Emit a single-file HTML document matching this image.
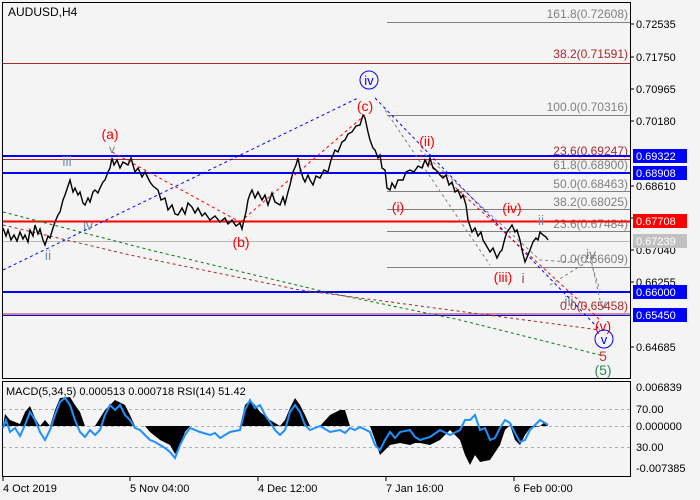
<!DOCTYPE html>
<html><head><style>
body{margin:0;background:#f4f4f4;}
svg{display:block;font-family:"Liberation Sans",sans-serif;}
</style></head><body>
<svg width="700" height="500" viewBox="0 0 700 500" xmlns="http://www.w3.org/2000/svg">
<rect width="700" height="500" fill="#f4f4f4"/>
<rect x="2.5" y="2.5" width="628" height="376" fill="none" stroke="#000"/>
<rect x="2.5" y="381.5" width="628" height="95" fill="none" stroke="#000"/>
<text x="8" y="16" font-size="12">AUDUSD,H4</text>

<g stroke="#808080" stroke-width="1">
<line x1="387" y1="22.5" x2="630" y2="22.5"/>
<line x1="387" y1="115.5" x2="630" y2="115.5"/>
<line x1="387" y1="191.5" x2="630" y2="191.5"/>
<line x1="387" y1="209.5" x2="630" y2="209.5"/>
<line x1="387" y1="231.5" x2="630" y2="231.5"/>
<line x1="387" y1="267.5" x2="630" y2="267.5"/>
</g>
<line x1="3" y1="241.5" x2="630" y2="241.5" stroke="#b8b8b8"/>
<g fill="#808080" font-size="12" text-anchor="end">
<text x="628" y="18">161.8(0.72608)</text>
<text x="628" y="111">100.0(0.70316)</text>
<text x="628" y="169">61.8(0.68900)</text>
<text x="628" y="188">50.0(0.68463)</text>
<text x="628" y="206">38.2(0.68025)</text>
<text x="628" y="228">23.6(0.67484)</text>
<text x="628" y="263">0.0(0.66609)</text>
</g>
<g fill="#a52a2a" font-size="12" text-anchor="end">
<text x="628" y="58">38.2(0.71591)</text>
<text x="628" y="155">23.6(0.69247)</text>
<text x="628" y="310">0.0(0.65458)</text>
</g>
<line x1="3" y1="63.5" x2="630" y2="63.5" stroke="#a52a2a"/>
<line x1="3" y1="159.5" x2="630" y2="159.5" stroke="#a52a2a"/>
<line x1="3" y1="156" x2="630" y2="156" stroke="#0000ff" stroke-width="2"/>
<line x1="3" y1="173" x2="630" y2="173" stroke="#0000ff" stroke-width="2"/>
<line x1="3" y1="221.5" x2="630" y2="221.5" stroke="#ff0000" stroke-width="2"/>
<line x1="3" y1="292" x2="630" y2="292" stroke="#0000ff" stroke-width="2"/>
<line x1="3" y1="314" x2="630" y2="314" stroke="#a52a2a" stroke-width="1"/>
<line x1="3" y1="315.5" x2="630" y2="315.5" stroke="#0000ff" stroke-width="1"/>

<g fill="none" stroke-width="1" stroke-dasharray="3,3">
<polyline points="3,270 358,98" stroke="#0000ff"/>
<polyline points="375,98 600,330" stroke="#0000ff"/>
<polyline points="240,222 365,115" stroke="#ff0000"/>
<polyline points="112,152 240,222" stroke="#ff0000"/>
<polyline points="420,155 600,320" stroke="#ff0000"/>
<polyline points="3,225 130,255 300,290 450,310 600,330" stroke="#a52a2a"/>
<polyline points="3,212 150,250 330,293 460,320 600,355" stroke="#008000"/>
<polyline points="385,110 490,265" stroke="#808080"/>
<polyline points="420,150 540,260 570,262 590,255 600,300" stroke="#808080"/>
<polyline points="550,285 590,260 600,290" stroke="#808080"/>
</g>

<g fill="none" stroke="#000" stroke-width="1.4">
<polyline points="3,228 6,236 8,230 11,240 14,235 17,241 20,232 23,239 25,235 28,242 30,230 33,236 35,225 38,234 40,229 43,240 45,245 48,236 50,238 53,228 55,222 58,215 60,212 63,200 65,195 68,186 70,180 73,192 75,188 78,195 80,192 83,203 85,205 88,198 90,202 93,192 95,190 98,193 100,188 103,182 105,180 108,172 110,168 112,158 114,165 117,160 120,168 123,162 128,165 131,158 135,172 138,168 142,177 145,172 150,182 153,186 158,190 161,200 165,198 168,210 172,205 175,214 178,215 182,208 185,214 188,203 192,207 195,213 198,208 202,216 205,213 210,220 215,216 220,222 225,218 228,224 232,220 236,226 240,223 242,229 244,220 246,212 248,200 250,194 252,190 255,198 258,192 262,200 265,195 268,205 272,193 275,202 280,205 283,197 285,204 288,192 290,185 293,172 296,165 298,158 300,168 303,178 305,182 308,175 310,180 313,185 316,176 320,178 324,170 328,172 331,160 335,150 338,152 342,142 345,140 348,134 352,132 356,126 360,125 363,115 365,118 368,132 370,140 373,148 375,150 378,158 380,155 382,168 385,170 387,188 390,190 392,183 395,188 398,180 403,180 406,172 410,170 414,172 418,166 422,168 425,160 428,166 430,158 433,168 436,170 440,175 443,178 446,175 449,185 452,182 455,192 458,190 461,198 463,195 466,205 468,220 472,232 475,228 478,236 481,232 483,240 486,245 490,252 493,248 497,258 500,252 502,250 505,238 507,232 510,228 512,225 515,232 517,230 520,240 522,250 525,262 528,255 530,250 533,242 536,238 538,240 540,232 543,235 546,237 548,240"/>
</g>

<g font-size="14" text-anchor="middle">
<text x="110" y="139" fill="#ff0000">(a)</text>
<text x="112" y="153" fill="#808080" font-size="12">v</text>
<text x="67" y="166" fill="#7090b0">iii</text>
<text x="88" y="230" fill="#7090b0">iv</text>
<text x="48" y="260" fill="#7090b0">ii</text>
<text x="241" y="247" fill="#ff0000">(b)</text>
<text x="365" y="111" fill="#ff0000">(c)</text>
<text x="427" y="146" fill="#ff0000">(ii)</text>
<text x="398" y="212" fill="#ff0000">(i)</text>
<text x="512" y="213" fill="#ff0000">(iv)</text>
<text x="503" y="282" fill="#ff0000">(iii)</text>
<text x="523" y="283" fill="#a05050">i</text>
<text x="541" y="225" fill="#7090b0">ii</text>
<text x="591" y="259" fill="#808080">iv</text>
<text x="569" y="306" fill="#808080">iii</text>
<text x="603" y="309" fill="#808080">v</text>
<text x="603" y="331" fill="#ff0000">(v)</text>
<text x="603" y="361" fill="#c0392b">5</text>
<text x="603" y="375" fill="#2e8b57">(5)</text>
</g>
<circle cx="369" cy="80" r="9" fill="none" stroke="#0000ff"/>
<text x="369" y="85" fill="#0000ff" font-size="13" text-anchor="middle">iv</text>
<circle cx="604" cy="339" r="9" fill="none" stroke="#0000ff"/>
<text x="604" y="344" fill="#0000ff" font-size="13" text-anchor="middle">v</text>

<g font-size="11">
<g stroke="#000"><line x1="630" y1="24" x2="634" y2="24"/><line x1="630" y1="57" x2="634" y2="57"/><line x1="630" y1="89" x2="634" y2="89"/><line x1="630" y1="121" x2="634" y2="121"/><line x1="630" y1="186" x2="634" y2="186"/><line x1="630" y1="218" x2="634" y2="218"/><line x1="630" y1="250" x2="634" y2="250"/><line x1="630" y1="282" x2="634" y2="282"/><line x1="630" y1="347" x2="634" y2="347"/></g>
<text x="636" y="28">0.72535</text>
<text x="636" y="61">0.71750</text>
<text x="636" y="93">0.70965</text>
<text x="636" y="125">0.70180</text>
<text x="636" y="190">0.68610</text>
<text x="636" y="254">0.67040</text>
<text x="636" y="286">0.66255</text>
<text x="636" y="351">0.64685</text>
<rect x="633" y="149" width="54" height="14" fill="#0000ff"/><text x="636" y="160" fill="#fff">0.69322</text>
<rect x="633" y="166" width="54" height="14" fill="#0000ff"/><text x="636" y="177" fill="#fff">0.68908</text>
<rect x="633" y="214" width="54" height="14" fill="#ff0000"/><text x="636" y="225" fill="#fff">0.67708</text>
<rect x="633" y="234" width="54" height="14" fill="#c0c0c0"/><text x="636" y="245" fill="#fff">0.67239</text>
<rect x="633" y="285" width="54" height="14" fill="#0000ff"/><text x="636" y="296" fill="#fff">0.66000</text>
<rect x="633" y="308" width="54" height="14" fill="#0000ff"/><text x="636" y="319" fill="#fff">0.65450</text>
</g>

<g stroke="#b0b0b0" stroke-dasharray="3,3"><line x1="3" y1="409.5" x2="630" y2="409.5"/><line x1="3" y1="426.5" x2="630" y2="426.5"/><line x1="3" y1="447.5" x2="630" y2="447.5"/></g>
<polygon fill="#000" points="3,426 5,414 10,420 20,424 25,412 30,406 35,418 40,426 45,420 50,426 55,410 60,398 70,397 75,405 80,412 85,426 95,426 105,410 115,400 125,405 130,415 135,426 145,426 150,432 160,440 170,445 175,454 180,445 185,432 190,426 240,426 245,405 250,400 255,405 260,412 270,420 280,426 285,420 290,408 295,398 300,405 305,415 310,426 320,426 330,415 340,410 345,410 350,426 370,426 375,440 380,455 385,450 390,445 400,443 410,445 415,443 420,443 430,445 440,440 450,430 460,440 465,455 470,465 475,455 480,462 490,460 500,445 505,430 510,425 515,440 520,445 525,435 530,428 540,426 545,422 548,426"/>
<polyline fill="none" stroke="#1e90ff" stroke-width="2" points="3,428 6,420 10,432 15,428 20,436 25,425 30,412 35,420 40,432 45,440 50,430 55,415 60,402 65,398 70,405 75,420 80,432 85,437 90,430 95,435 100,430 105,415 110,405 115,410 120,405 125,415 130,420 135,428 140,430 145,435 150,440 155,442 160,445 165,448 170,452 175,458 180,445 185,435 190,428 200,432 210,435 215,433 220,438 225,435 230,432 240,430 245,410 250,400 255,408 260,405 265,415 270,422 275,430 280,435 285,430 290,412 295,405 300,412 305,425 310,430 315,428 320,426 330,432 340,430 345,433 350,428 355,430 360,427 370,432 375,445 380,450 385,440 390,432 395,438 400,432 410,430 415,437 420,440 430,437 440,430 450,435 460,430 465,420 470,420 475,415 480,430 485,428 490,440 495,438 500,428 505,420 510,423 515,433 520,442 525,440 530,430 535,425 540,420 545,423 548,425"/>
<text x="6" y="395" font-size="11">MACD(5,34,5) 0.000513 0.000718 RSI(14) 51.42</text>
<g font-size="11">
<text x="636" y="391">0.006839</text>
<text x="636" y="413">70.00</text>
<text x="636" y="430">0.000000</text>
<text x="636" y="451">30.00</text>
<text x="636" y="472">-0.007385</text>
</g>
<g stroke="#000"><line x1="3" y1="476" x2="3" y2="481"/><line x1="130" y1="476" x2="130" y2="481"/><line x1="258" y1="476" x2="258" y2="481"/><line x1="386" y1="476" x2="386" y2="481"/><line x1="514" y1="476" x2="514" y2="481"/></g>
<g font-size="11">
<text x="3" y="492">4 Oct 2019</text>
<text x="130" y="492">5 Nov 04:00</text>
<text x="258" y="492">4 Dec 12:00</text>
<text x="386" y="492">7 Jan 16:00</text>
<text x="514" y="492">6 Feb 00:00</text>
</g>
</svg>
</body></html>
